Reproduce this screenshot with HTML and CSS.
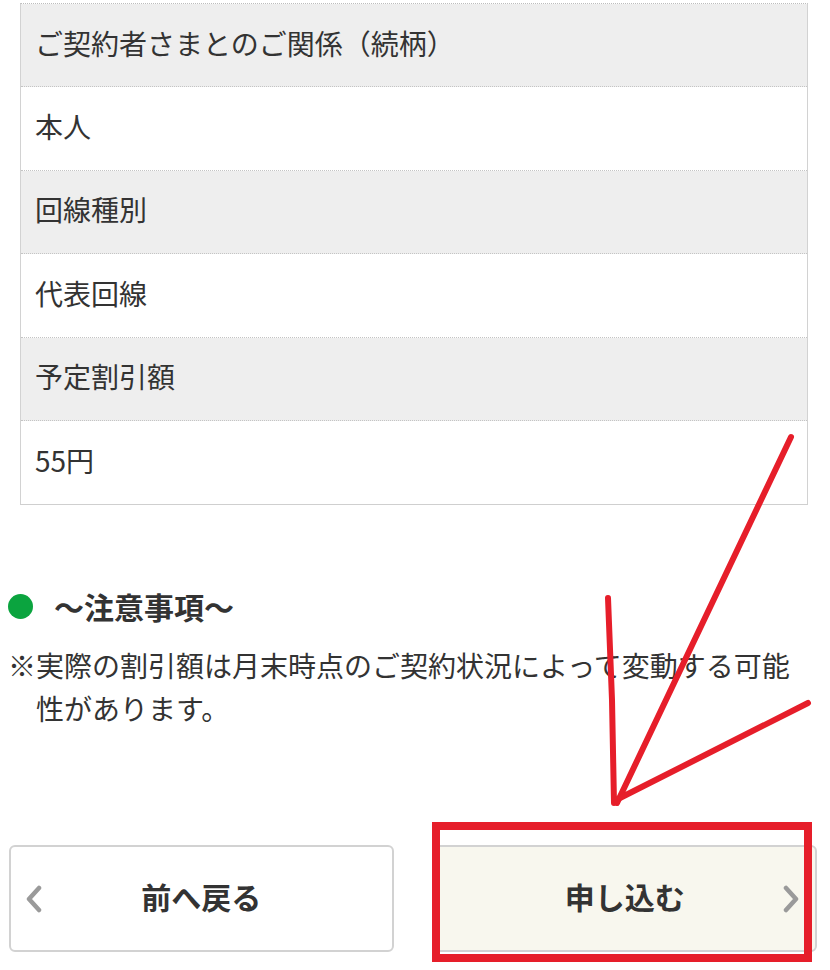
FILE: index.html
```html
<!DOCTYPE html>
<html lang="ja">
<head>
<meta charset="utf-8">
<title>確認</title>
<link rel="stylesheet" href="styles.css">
</head>
<body>
<div class="page">
  <div class="table">
    <div class="row head">ご契約者さまとのご関係（続柄）</div>
    <div class="row">本人</div>
    <div class="row head">回線種別</div>
    <div class="row">代表回線</div>
    <div class="row head">予定割引額</div>
    <div class="row last">55円</div>
  </div>

  <div class="notes">
    <h2 class="notes-title"><span class="dot"></span>～注意事項～</h2>
    <p class="notes-text">※実際の割引額は月末時点のご契約状況によって変動する可能性があります。</p>
  </div>

  <div class="buttons">
    <button class="btn btn-back" type="button">
      <svg class="chev chev-left" width="18" height="28" viewBox="0 0 18 28"><path d="M14 3 L4 14 L14 25" fill="none" stroke="#9a9a9a" stroke-width="4.5" stroke-linecap="round" stroke-linejoin="round"/></svg>
      前へ戻る
    </button>
    <button class="btn btn-apply" type="button">
      申し込む
      <svg class="chev chev-right" width="18" height="28" viewBox="0 0 18 28"><path d="M4 3 L14 14 L4 25" fill="none" stroke="#9a9a9a" stroke-width="4.5" stroke-linecap="round" stroke-linejoin="round"/></svg>
    </button>
  </div>

  <svg class="annotation" width="830" height="970" viewBox="0 0 830 970">
    <g fill="none" stroke="#e61e2a" stroke-linecap="round" stroke-linejoin="round">
      <path d="M791 437 L617 803" stroke-width="6"/>
      <path d="M608 598 L612 700 L614 803" stroke-width="6"/>
      <path d="M808 703 L616 800" stroke-width="6"/>
      <rect x="436" y="826" width="372" height="132" stroke-width="8" stroke-linejoin="miter"/>
    </g>
  </svg>
</div>
</body>
</html>
```

FILE: styles.css
```css
html, body {
  margin: 0;
  padding: 0;
  background: #ffffff;
}

body {
  font-family: "Noto Sans CJK JP", "Noto Sans", sans-serif;
  color: #333333;
}

.page {
  position: relative;
  width: 830px;
  height: 970px;
  overflow: hidden;
}

.table {
  margin: 3px 22px 0 20px;
  border-left: 1px solid #d2d2d2;
  border-right: 1px solid #d2d2d2;
  border-top: 1px dotted #bdbdbd;
  border-bottom: 1px solid #cfcfcf;
}

.row {
  box-sizing: border-box;
  height: 83.4px;
  display: flex;
  align-items: center;
  padding: 0 0 5px 14px;
  font-size: 28px;
  line-height: 1;
  background: #ffffff;
  border-bottom: 1px dotted #c4c4c4;
}

.row.head {
  background: #eeeeee;
}

.row.last {
  border-bottom: none;
}

.notes {
  margin: 81px 22px 0 8px;
}

.notes-title {
  display: flex;
  align-items: center;
  gap: 21px;
  margin: 0;
  height: 40px;
  font-size: 30px;
  font-weight: bold;
  line-height: 40px;
  color: #333333;
}

.dot {
  width: 25px;
  height: 25px;
  border-radius: 50%;
  background: #0ba43f;
  flex: none;
}

.notes-text {
  margin: 18px 0 0 0;
  font-size: 28px;
  line-height: 43px;
  padding-left: 1em;
  text-indent: -1em;
  color: #333333;
}

.buttons {
  display: grid;
  grid-template-columns: 1fr 1fr;
  gap: 39px;
  margin: 115px 13px 0 9px;
}

.btn {
  position: relative;
  box-sizing: border-box;
  height: 107px;
  border: 2px solid #d2d2d2;
  border-radius: 6px;
  background: #ffffff;
  font-family: "Noto Sans CJK JP", "Noto Sans", sans-serif;
  font-size: 30px;
  font-weight: bold;
  color: #333333;
  padding: 0 0 6px 0;
}

.btn-apply {
  background: #f8f7ee;
}

.chev {
  position: absolute;
  top: 50%;
  margin-top: -14px;
}

.chev-left {
  left: 14px;
}

.chev-right {
  right: 15px;
}

.annotation {
  position: absolute;
  left: 0;
  top: 0;
  pointer-events: none;
}
```
